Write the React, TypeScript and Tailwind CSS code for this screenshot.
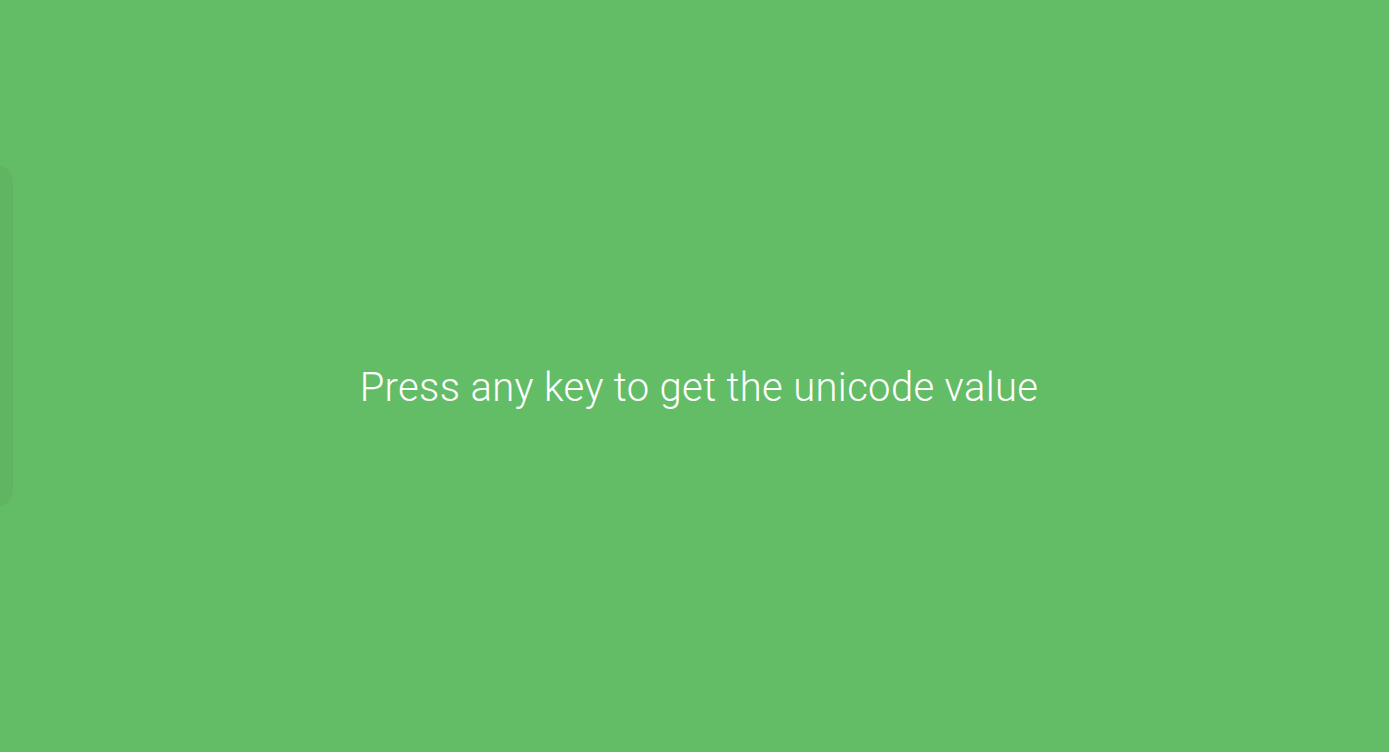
export default function App() {
  return (
    <div className="relative flex h-screen w-full items-center justify-center overflow-hidden bg-[#63bd67] font-['Roboto',sans-serif]">
      {/* hidden key panel, slid off to the left */}
      <div className="absolute top-[165px] left-[-300px] h-[342px] w-[313px] rounded-[16px] bg-black/[0.04]"></div>

      <p className="mt-6 ml-[9px] text-[40px] font-light tracking-[0.35px] text-white">Press any key to get the unicode value</p>
    </div>
  );
}
